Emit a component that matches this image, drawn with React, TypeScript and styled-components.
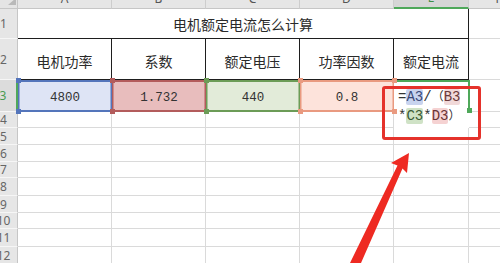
import React from "react";
import styled, { createGlobalStyle, css } from "styled-components";

const Global = createGlobalStyle`
  html, body { margin: 0; padding: 0; background: #fff; }
  body { width: 500px; height: 263px; overflow: hidden; }
`;

const Viewport = styled.div`
  position: relative;
  width: 500px;
  height: 263px;
  overflow: hidden;
  background: #fff;
`;

const Sheet = styled.div`
  display: grid;
  margin: -11px 0 0 -10px;
  grid-template-columns: 28px 94px 94px 94px 94px 75px 60px;
  grid-template-rows: 20px 30px 41px 32px 16px 17px 17px 16px 18px 17px 16px 18px 17px;
  font-family: "Noto Sans CJK SC", "Noto Sans", sans-serif;
  color: #2a2a2a;
`;

const CornerCell = styled.div`
  background: #e4e4e4;
  border-right: 1px solid #c6c6c6;
  border-bottom: 1px solid #c6c6c6;
  box-sizing: border-box;
  display: flex;
  align-items: flex-end;
  justify-content: flex-end;
  padding: 0 1px 3px 0;
`;

const CornerTriangle = styled.span`
  width: 0;
  height: 0;
  border-left: 8px solid transparent;
  border-bottom: 7px solid #b9b9b9;
`;

const ColHeader = styled.div<{ $active?: boolean }>`
  box-sizing: border-box;
  background: ${(p) => (p.$active ? "#d6d6d6" : "#e6e6e6")};
  border-right: 1px solid #cdcdcd;
  border-bottom: ${(p) => (p.$active ? "2px solid #4fa85a" : "1px solid #c6c6c6")};
  display: flex;
  align-items: flex-end;
  justify-content: center;
  padding-bottom: 2px;
  font-family: "Noto Sans", sans-serif;
  font-size: 12px;
  line-height: 14px;
  color: ${(p) => (p.$active ? "#3f8f48" : "#555")};
`;

const RowHeader = styled.div<{ $active?: boolean }>`
  box-sizing: border-box;
  background: ${(p) => (p.$active ? "#dcdcdc" : "#e6e6e6")};
  border-right: ${(p) => (p.$active ? "2px solid #4fa85a" : "1px solid #c6c6c6")};
  border-bottom: 1px solid #f6f6f6;
  display: flex;
  align-items: center;
  justify-content: center;
  font-family: "Noto Sans", sans-serif;
  font-size: 12px;
  color: ${(p) => (p.$active ? "#4a9a50" : "#666")};
`;

const Cell = styled.div`
  box-sizing: border-box;
  border-right: 1px solid #dadada;
  border-bottom: 1px solid #dadada;
`;

const TitleCell = styled.div`
  grid-column: span 5;
  box-sizing: border-box;
  border-right: 1px solid #1e1e1e;
  border-bottom: 1px solid #1e1e1e;
  display: flex;
  align-items: center;
  justify-content: center;
  font-size: 14px;
  padding-top: 1px;
`;

const HeadCell = styled.div`
  box-sizing: border-box;
  border-right: 1px solid #1e1e1e;
  border-bottom: 1px solid #1e1e1e;
  display: flex;
  align-items: center;
  justify-content: center;
  font-size: 14px;
  padding-top: 4px;
`;

const ValueCell = styled.div<{ $bg: string; $line: string }>`
  position: relative;
  box-sizing: border-box;
  background: ${(p) => p.$bg};
  box-shadow: inset 0 2px 0 ${(p) => p.$line}, inset 0 -2px 0 ${(p) => p.$line},
    inset 1.5px 0 0 ${(p) => p.$line}, inset -1.5px 0 0 ${(p) => p.$line};
  display: flex;
  align-items: center;
  justify-content: center;
  padding-top: 3px;
  font-family: "Liberation Mono", monospace;
  font-size: 12.5px;
  color: #333;
`;

const Handle = styled.span<{ $color: string; $v: "top" | "bottom"; $h: "left" | "right" }>`
  position: absolute;
  width: 5px;
  height: 5px;
  background: ${(p) => p.$color};
  ${(p) => (p.$v === "top" ? css`top: -2px;` : css`bottom: -2px;`)}
  ${(p) => (p.$h === "left" ? css`left: -2px;` : css`right: -3px;`)}
  z-index: 2;
`;

const EditCell = styled.div`
  position: relative;
  grid-row: span 2;
  box-sizing: border-box;
  background: #fff;
  box-shadow: inset 0 2px 0 #4fa85a;
  padding: 7px 0 0 4px;
  font-family: "Liberation Mono", "Noto Sans CJK SC", monospace;
  font-size: 14px;
  line-height: 17px;
  color: #333;
  white-space: nowrap;
  &::after {
    content: "";
    position: absolute;
    right: -1px;
    top: 0;
    width: 2px;
    height: 31px;
    background: #4fa85a;
  }
`;

const EditHandle = styled.span`
  position: absolute;
  right: -3px;
  top: 28px;
  width: 5px;
  height: 5px;
  background: #4fa85a;
  z-index: 2;
`;

const Ref = styled.span<{ $bg: string; $fg: string }>`
  background: ${(p) => p.$bg};
  color: ${(p) => p.$fg};
  border-radius: 2px;
`;

const Wide = styled.span`
  font-family: "Noto Sans CJK SC", sans-serif;
  font-size: 12px;
`;

const RedBox = styled.div`
  position: absolute;
  left: 382px;
  top: 86px;
  width: 99px;
  height: 54px;
  box-sizing: border-box;
  border: 3px solid #e5322b;
  border-radius: 3px;
  pointer-events: none;
`;

const Arrow = styled.svg`
  position: absolute;
  left: 0;
  top: 0;
  pointer-events: none;
`;

type Val = { text: string; bg: string; line: string };

const values: Val[] = [
  { text: "4800", bg: "#dee4f5", line: "#5475bb" },
  { text: "1.732", bg: "#e8bdbd", line: "#b35c5c" },
  { text: "440", bg: "#e2ebd9", line: "#6c9c57" },
  { text: "0.8", bg: "#fde3db", line: "#e99a80" },
];

const headers = ["电机功率", "系数", "额定电压", "功率因数", "额定电流"];
const letters = ["A", "B", "C", "D", "E", "F"];

export default function App() {
  const emptyRows = [5, 6, 7, 8, 9, 10, 11, 12, 13];
  return (
    <>
      <Global />
      <Viewport>
        <Sheet>
          <CornerCell>
            <CornerTriangle />
          </CornerCell>
          {letters.map((l) => (
            <ColHeader key={l} $active={l === "E"}>
              {l}
            </ColHeader>
          ))}

          <RowHeader>1</RowHeader>
          <TitleCell>电机额定电流怎么计算</TitleCell>
          <Cell />

          <RowHeader>2</RowHeader>
          {headers.map((h) => (
            <HeadCell key={h}>{h}</HeadCell>
          ))}
          <Cell />

          <RowHeader $active>3</RowHeader>
          {values.map((v) => (
            <ValueCell key={v.text} $bg={v.bg} $line={v.line}>
              {v.text}
              <Handle $color={v.line} $v="top" $h="left" />
              <Handle $color={v.line} $v="bottom" $h="left" />
              <Handle $color={v.line} $v="top" $h="right" />
              <Handle $color={v.line} $v="bottom" $h="right" />
            </ValueCell>
          ))}
          <EditCell>
            =<Ref $bg="#c8d3ee" $fg="#3a4a78">A3</Ref>/<Wide>（</Wide>
            <Ref $bg="#f1d9d9" $fg="#6a3a3a">B3</Ref>
            <br />*<Ref $bg="#cfe2c6" $fg="#3a5a32">C3</Ref>*
            <Ref $bg="#f5d2d2" $fg="#6a3434">D3</Ref>
            <Wide>）</Wide>
            <EditHandle />
          </EditCell>
          <Cell />

          <RowHeader>4</RowHeader>
          <Cell />
          <Cell />
          <Cell />
          <Cell />
          <Cell />

          {emptyRows.map((r) => (
            <React.Fragment key={r}>
              <RowHeader>{r}</RowHeader>
              <Cell />
              <Cell />
              <Cell />
              <Cell />
              <Cell />
              <Cell />
            </React.Fragment>
          ))}
        </Sheet>
        <RedBox />
        <Arrow width="500" height="263" viewBox="0 0 500 263">
          <polygon
            points="409,153 407,173 402.5,168.5 361,263 350,263 397.5,165.5 391,163"
            fill="#ee2a22"
          />
        </Arrow>
      </Viewport>
    </>
  );
}
